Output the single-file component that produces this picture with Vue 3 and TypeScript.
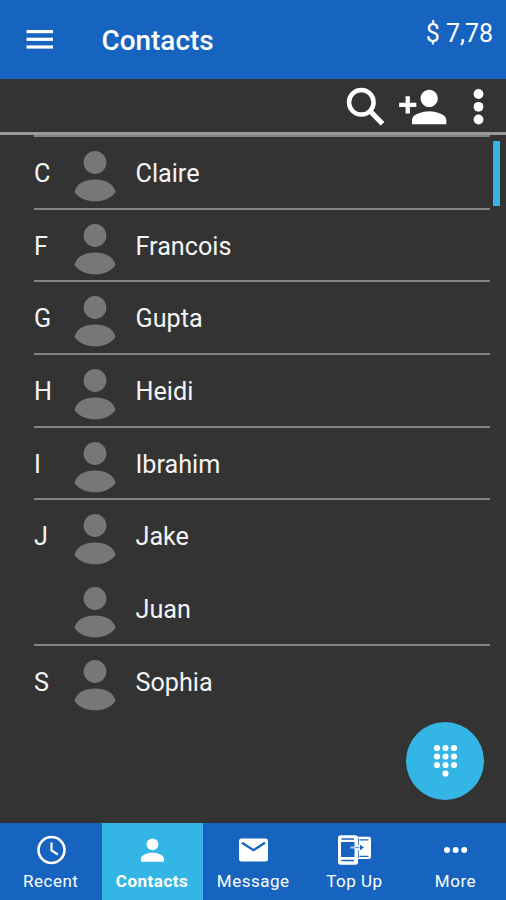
<script setup lang="ts">
interface Contact {
  letter: string
  name: string
  divided: boolean
}

const contacts: Contact[] = [
  { letter: 'C', name: 'Claire', divided: true },
  { letter: 'F', name: 'Francois', divided: true },
  { letter: 'G', name: 'Gupta', divided: true },
  { letter: 'H', name: 'Heidi', divided: true },
  { letter: 'I', name: 'Ibrahim', divided: true },
  { letter: 'J', name: 'Jake', divided: true },
  { letter: '', name: 'Juan', divided: false },
  { letter: 'S', name: 'Sophia', divided: true },
]

const tabs = ['Recent', 'Contacts', 'Message', 'Top Up', 'More']
const activeTab = 'Contacts'
const keys = [
  [4, 4], [12.5, 4], [21, 4],
  [4, 12.5], [12.5, 12.5], [21, 12.5],
  [4, 21], [12.5, 21], [21, 21],
  [12.5, 29.5],
]
</script>

<template>
  <div class="app">
    <header class="bar">
      <svg class="menu" width="28" height="20" viewBox="0 0 28 20" fill="#fff">
        <rect x="0.5" y="0" width="26.5" height="3.2" />
        <rect x="0.5" y="7.7" width="26.5" height="3.2" />
        <rect x="0.5" y="15.4" width="26.5" height="3.2" />
      </svg>
      <h1>Contacts</h1>
      <span class="balance">$ 7,78</span>
    </header>

    <div class="tools">
      <svg class="search" width="40" height="40" viewBox="0 0 40 40" fill="none" stroke="#fff">
        <circle cx="15.3" cy="15.3" r="12.3" stroke-width="4.5" />
        <path d="M24 24 36.500 36.800" stroke-width="5.2" />
      </svg>
      <svg class="add" width="51.500" height="52" viewBox="0 0 24 24" fill="#fff">
        <path d="M15 12c2.21 0 4-1.79 4-4s-1.79-4-4-4-4 1.790-4 4 1.790 4 4 4zM6 10V7H4v3H1v2h3v3h2v-3h3v-2H6zm9 4c-2.670 0-8 1.340-8 4v2h16v-2c0-2.660-5.330-4-8-4z" />
      </svg>
      <svg class="kebab" width="12" height="36" viewBox="0 0 12 36" fill="#fff">
        <circle cx="5.500" cy="5" r="4.9" />
        <circle cx="5.500" cy="17.8" r="4.9" />
        <circle cx="5.500" cy="30.5" r="4.9" />
      </svg>
    </div>

    <main>
      <ul class="list">
        <li v-for="c in contacts" :key="c.name" :class="{ divided: c.divided }">
          <span class="letter">{{ c.letter }}</span>
          <svg class="avatar" width="42" height="52" viewBox="0 0 42 52" fill="#777">
            <circle cx="21" cy="12.5" r="11.4" />
            <path d="M.4 42C2.500 33.500 11 29.600 21 29.600S39.500 33.500 41.600 42C37.500 48 29.500 51.300 21 51.300S4.500 48 .4 42Z" />
          </svg>
          <span class="name">{{ c.name }}</span>
        </li>
      </ul>
      <div class="thumb"></div>
      <button class="fab" aria-label="Dial pad">
        <svg width="25" height="34" viewBox="0 0 25 34" fill="#fff">
          <circle v-for="(k, i) in keys" :key="i" :cx="k[0]" :cy="k[1]" r="3.1" />
        </svg>
      </button>
    </main>

    <nav>
      <a v-for="t in tabs" :key="t" :class="{ active: t === activeTab }">
        <svg v-if="t === 'Recent'" width="36" height="32" viewBox="0 0 36 32" fill="none" stroke="#fff" stroke-width="2.6">
          <circle cx="18.500" cy="16" r="13" />
          <path d="M18.500 8.500V16.500l6.300 4" stroke-width="2.2" />
        </svg>
        <svg v-else-if="t === 'Contacts'" width="36" height="32" viewBox="0 0 36 32" fill="#fff">
          <circle cx="18.500" cy="10.300" r="5.900" />
          <path d="M7 27.700V24.500C7 20.500 14.500 18.700 18.500 18.700S30 20.500 30 24.500V27.700Z" />
        </svg>
        <svg v-else-if="t === 'Message'" width="36" height="32" viewBox="0 0 36 32">
          <rect x="4" y="4.500" width="29" height="23" rx="2.500" fill="#fff" />
          <path d="M7 8.800 18.500 16.200 30 8.800" fill="none" stroke="#1664bf" stroke-width="2.3" />
        </svg>
        <svg v-else-if="t === 'Top Up'" width="36" height="32" viewBox="0 0 36 32">
          <rect x="19" y="2.800" width="16" height="22.200" rx="2" fill="#fff" />
          <path d="M23.500 5.800h9M23.500 22.300h9" stroke="#1664bf" stroke-width="1.300" />
          <rect x="2" y="1.300" width="20" height="29.400" rx="2.800" fill="#fff" />
          <rect x="5" y="8" width="13.500" height="15" fill="#1664bf" />
          <path d="M5.500 5h12.500M5.500 26.500h12.500" stroke="#1664bf" stroke-width="1.400" />
          <path d="M14.500 13.500h5" stroke="#b9d4f2" stroke-width="2" />
          <path d="M19 13.500h4.500" stroke="#6c9fdb" stroke-width="1.500" />
          <path d="M24 10.800 28 13.500 24 16.200Z" fill="#1664bf" />
          <path d="M22.500 4v7M22.500 16v8" stroke="#4a88d2" stroke-width="1" />
        </svg>
        <svg v-else width="36" height="32" viewBox="0 0 36 32" fill="#fff">
          <circle cx="10" cy="16" r="3" />
          <circle cx="18.600" cy="16" r="3" />
          <circle cx="27.200" cy="16" r="3" />
        </svg>
        <span>{{ t }}</span>
      </a>
    </nav>
  </div>
</template>

<style>
body {
  margin: 0;
  background: #333;
}
</style>

<style scoped>
.app {
  width: 506px;
  height: 900px;
  display: flex;
  flex-direction: column;
  overflow: hidden;
  background: #333;
  color: #f4f4f4;
  font-family: Roboto, sans-serif;
}
.bar {
  height: 79px;
  flex: none;
  display: flex;
  align-items: center;
  box-sizing: border-box;
  padding: 0 13px 0 26px;
  background: #1664bf;
  color: #fff;
}
.menu {
  margin-right: 47.500px;
}
h1 {
  flex: 1;
  margin: 2px 0 0;
  font-size: 27.900px;
  font-weight: 500;
  line-height: 32px;
}
.balance {
  align-self: flex-start;
  margin-top: 18px;
  font-size: 25px;
  line-height: 32px;
}
.tools {
  height: 53px;
  flex: none;
  display: flex;
  justify-content: flex-end;
  align-items: center;
  box-sizing: border-box;
  height: 56px;
  padding: 2px 21px 0 0;
  border-bottom: 3px solid #999;
}
.search {
  margin-right: 11px;
}
.add {
  margin-right: 24.500px;
}
main {
  position: relative;
  flex: 1;
}
.list {
  margin: 0 16px 0 34px;
  padding: 0;
  list-style: none;
}
li {
  height: 72.7px;
  box-sizing: border-box;
  display: flex;
  align-items: center;
  padding-top: 3px;
  border-top: 2px solid transparent;
  font-size: 25.200px;
  line-height: 32px;
}
li.divided {
  border-top-color: #838383;
}
.letter {
  width: 40px;
}
.avatar {
  margin: 4px 19.500px 0 0;
}
.thumb {
  position: absolute;
  top: 6px;
  right: 6px;
  width: 7px;
  height: 65px;
  background: #33b5e5;
}
.fab {
  position: absolute;
  right: 22px;
  bottom: 23.500px;
  width: 78px;
  height: 78px;
  display: flex;
  align-items: center;
  justify-content: center;
  padding: 0;
  border: 0;
  border-radius: 50%;
  background: #33b5e5;
}
nav {
  height: 77px;
  flex: none;
  display: grid;
  grid-template-columns: 101.500px repeat(4, 1fr);
  background: #1664bf;
}
a {
  display: flex;
  flex-direction: column;
  align-items: center;
  padding-top: 11px;
  color: #fff;
  font-size: 17px;
  line-height: 22px;
  letter-spacing: 0.5px;
}
a span {
  margin-top: 4px;
}
a.active {
  background: #33b5e5;
  font-weight: 700;
}
</style>
